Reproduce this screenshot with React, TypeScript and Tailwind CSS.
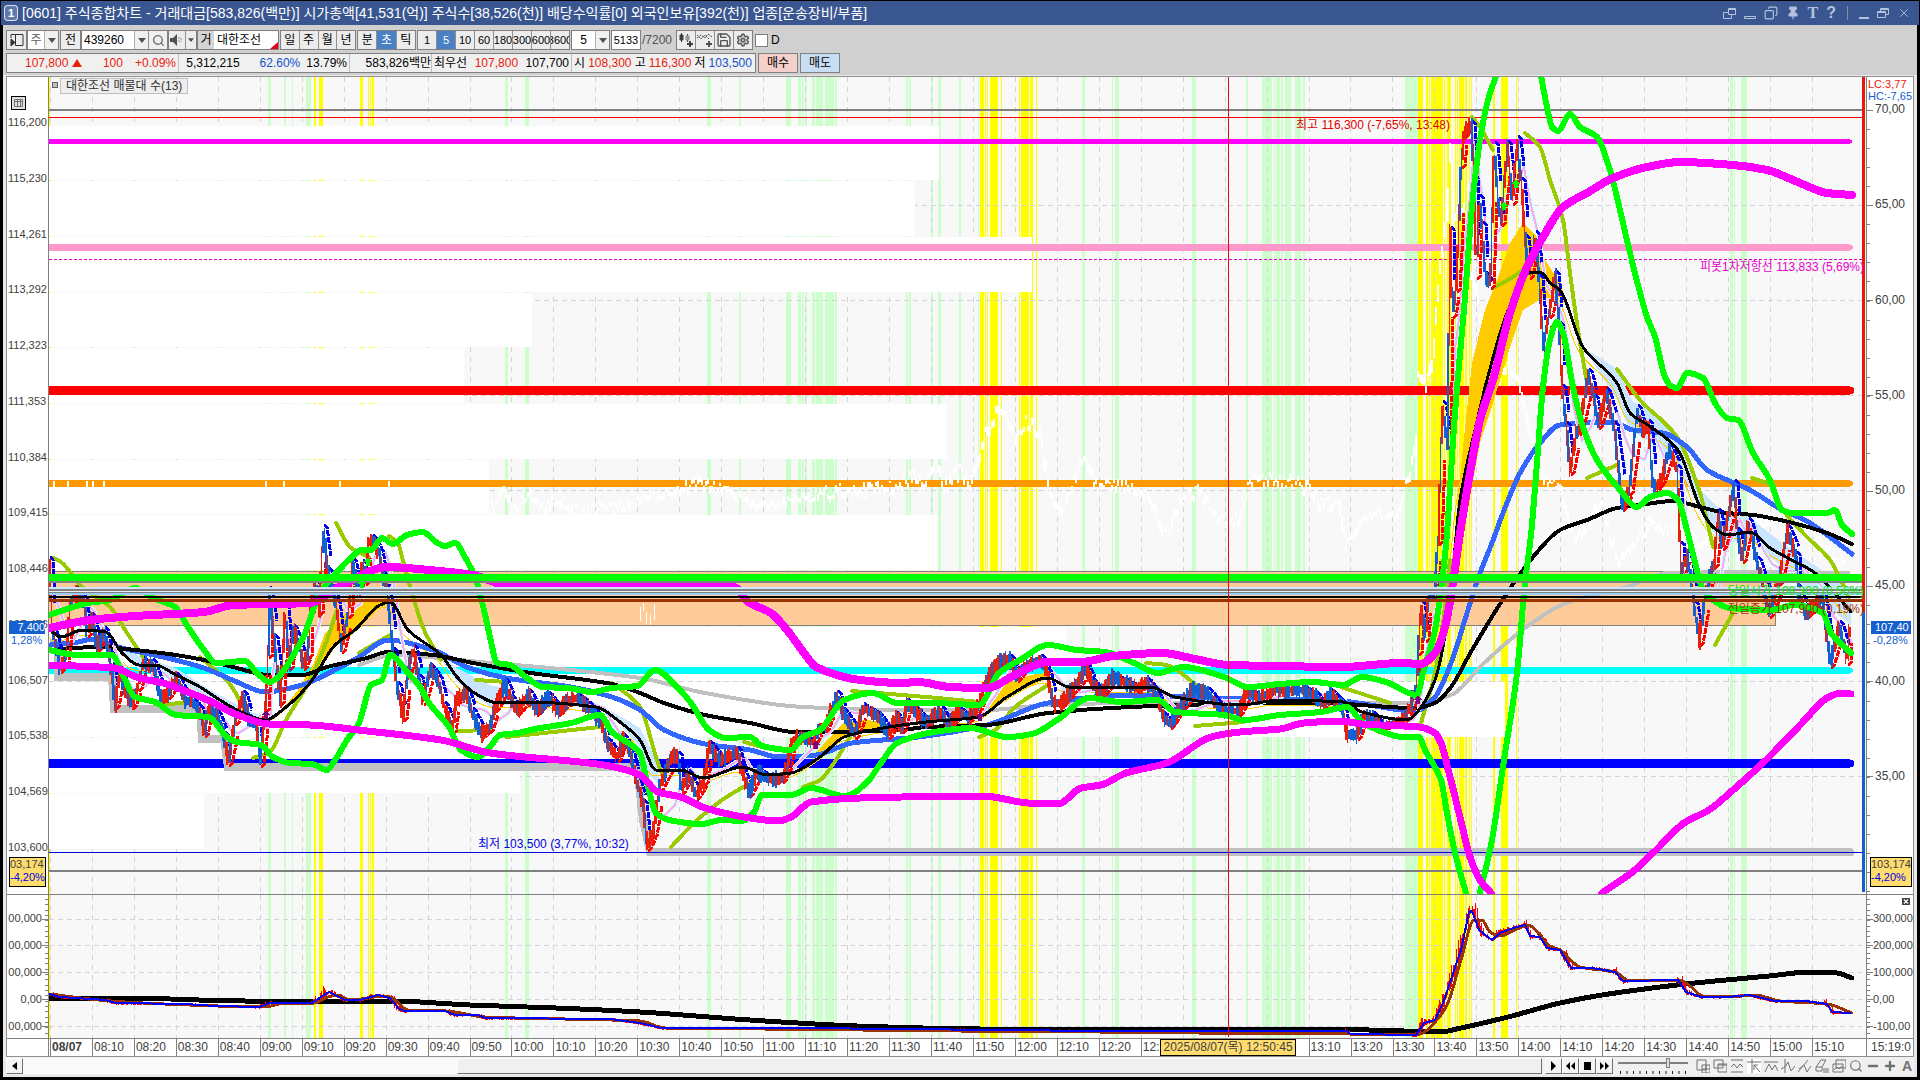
import { Search, Settings, Save, Pin, Copy, X, Minus, Plus } from 'lucide-react';
import { ReactNode, useState } from 'react';

type Point = [number, number];

const parse = (s: string): Point[] => s.split(' ').map((p) => p.split(',').map(Number) as Point);

// Seeded noise, so the candles look the same on every render
const createRandom = (seed: number) => () => {
  seed = (seed * 16807) % 2147483647;
  return seed / 2147483647;
};

const valueAt = (points: Point[], x: number) => {
  for (let i = 1; i < points.length; i++) {
    if (x <= points[i][0]) {
      const [x0, y0] = points[i - 1];
      const [x1, y1] = points[i];
      return x1 === x0 ? y1 : y0 + ((y1 - y0) * (x - x0)) / (x1 - x0);
    }
  }
  return points[points.length - 1][1];
};

// Rounded path through the points, level at every local top and bottom
const smoothPath = (s: string) => {
  const p = parse(s);
  const slope = p.map(([x, y], i) => {
    if (i === 0 || i === p.length - 1) return 0;
    const before = (y - p[i - 1][1]) / (x - p[i - 1][0]);
    const after = (p[i + 1][1] - y) / (p[i + 1][0] - x);
    return before * after <= 0 ? 0 : (2 * before * after) / (before + after);
  });
  slope[0] = (p[1][1] - p[0][1]) / (p[1][0] - p[0][0]);
  const n = p.length - 1;
  slope[n] = (p[n][1] - p[n - 1][1]) / (p[n][0] - p[n - 1][0]);
  let d = `M${p[0][0]} ${p[0][1]}`;
  for (let i = 1; i < p.length; i++) {
    const third = (p[i][0] - p[i - 1][0]) / 3;
    const y1 = p[i - 1][1] + slope[i - 1] * third;
    const y2 = p[i][1] - slope[i] * third;
    d += `C${(p[i - 1][0] + third).toFixed(1)} ${y1.toFixed(1)} ${(p[i][0] - third).toFixed(1)} ${y2.toFixed(1)} ${p[i][0]} ${p[i][1]}`;
  }
  return d;
};

const greenBands: Point[] = [
  [268, 3], [284, 2], [292, 1], [306, 5], [505, 3], [525, 4], [707, 4], [739, 2], [786, 5], [798, 3], [802, 2],
  [805, 2], [812, 3], [816, 7], [825, 9], [835, 2], [906, 2], [909, 2], [931, 2], [938, 3], [959, 2], [978, 1],
  [1082, 3], [1112, 1], [1115, 4], [1192, 4], [1246, 2], [1262, 10], [1274, 1], [1276, 4], [1281, 2], [1285, 6],
  [1295, 6], [1303, 2], [1405, 13], [1730, 3], [1734, 1], [1741, 6],
];

const yellowBands: Point[] = [
  [49, 1], [314, 2], [319, 4], [360, 3], [368, 1], [370, 1], [372, 2], [980, 4], [985, 1], [987, 1], [990, 8],
  [1001, 1], [1019, 1], [1021, 8], [1030, 3], [1036, 1], [1418, 5], [1426, 2], [1429, 1], [1431, 12], [1444, 1],
  [1447, 4], [1455, 1], [1457, 1], [1459, 5], [1465, 2], [1469, 1], [1471, 1], [1493, 2], [1501, 7], [1516, 1],
];

// Volume profile: top, bottom, right edge
const volumeBars = [
  [126, 180, 939], [181, 236, 915], [237, 292, 1032], [293, 347, 532], [348, 403, 464], [404, 459, 947],
  [460, 514, 489], [515, 570, 938], [627, 681, 1066], [682, 737, 1505], [738, 793, 520], [794, 849, 204],
];

const price = parse(
  '50,562 53,630 61,668 66,660 71,604 77,592 84,600 88,632 92,618 98,647 105,632 110,655 116,704 121,672 126,692 133,704 139,686 144,662 148,667 153,664 162,698 169,694 177,678 186,700 194,703 200,710 205,732 210,706 218,716 225,737 229,761 236,720 244,696 250,720 258,727 261,762 266,707 269,653 270,592 275,640 281,700 286,610 290,665 294,630 300,645 304,665 309,653 311,610 316,585 320,610 324,530 329,573 333,590 337,605 342,648 349,613 353,563 359,590 363,565 366,580 369,543 373,540 380,553 384,577 388,593 394,653 398,687 404,716 408,673 414,650 420,680 424,700 431,669 439,680 445,707 453,729 457,700 467,692 473,713 482,734 490,728 496,707 506,684 512,700 518,711 529,694 537,711 549,697 559,711 569,700 578,698 592,710 602,723 608,743 618,757 624,739 631,753 637,780 644,805 648,846 654,833 660,787 673,755 679,757 682,790 689,775 697,795 705,780 710,746 720,760 738,752 743,773 750,792 758,772 771,780 783,778 788,767 793,740 803,737 813,743 820,729 826,727 832,710 838,696 844,713 856,734 864,708 879,717 889,734 897,717 903,728 908,704 918,713 926,722 942,711 948,725 960,712 969,718 979,707 987,680 995,667 1003,659 1011,660 1018,677 1026,665 1042,660 1048,673 1054,704 1062,703 1073,690 1087,668 1093,683 1101,695 1113,677 1126,683 1138,688 1148,683 1158,697 1164,717 1171,724 1179,710 1193,689 1209,693 1220,710 1240,711 1248,692 1260,698 1273,690 1304,690 1317,697 1323,705 1331,694 1343,707 1347,734 1358,735 1364,717 1374,717 1382,728 1394,723 1402,722 1411,707 1417,687 1419,650 1422,606 1426,637 1429,597 1435,593 1439,540 1443,406 1448,444 1451,232 1453,313 1457,287 1462,163 1465,133 1470,126 1472,126 1475,180 1477,274 1480,200 1483,227 1486,277 1491,284 1495,147 1499,203 1502,221 1508,146 1513,200 1518,141 1522,183 1526,240 1530,274 1536,236 1540,280 1544,346 1550,313 1556,276 1560,327 1563,390 1567,427 1571,470 1577,433 1580,430 1589,374 1595,400 1599,424 1607,393 1615,427 1623,506 1630,490 1638,410 1643,430 1649,425 1654,490 1662,480 1670,449 1678,470 1681,547 1682,573 1688,555 1695,606 1700,641 1707,590 1715,563 1719,514 1723,545 1735,485 1738,533 1743,558 1749,523 1758,562 1770,613 1780,580 1788,530 1797,557 1799,590 1806,614 1823,597 1831,663 1840,626 1848,660 1850,632',
);

const bollUpper1 =
  '49,615 61,611 88,603 110,600 135,588 153,598 175,607 188,627 204,650 216,663 245,661 257,673 269,682 302,640 320,593 339,570 352,557 361,550 371,550 382,538 393,544 407,535 423,532 436,542 445,546 455,543 466,559 475,577 484,610 490,637 497,663 510,665 527,678 543,687 567,688 592,692 612,688 637,686 655,670 677,687 691,703 709,730 726,738 750,737 762,746 791,750 803,737 820,730 844,700 873,693 897,703 934,703 979,705 999,673 1020,660 1048,645 1077,650 1105,652 1134,663 1158,673 1183,667 1224,677 1248,687 1280,684 1313,682 1343,685 1362,677 1386,682 1417,695 1423,673 1435,630 1441,590 1446,545 1455,413 1465,297 1472,207 1480,140 1488,100 1496,76';
const bollUpper2 =
  '1541,76 1547,107 1552,127 1558,131 1570,114 1580,127 1597,137 1610,170 1620,210 1630,253 1647,317 1655,337 1665,377 1671,386 1677,388 1687,373 1703,378 1715,403 1727,418 1738,420 1753,453 1770,480 1782,510 1793,513 1827,513 1835,510 1842,525 1852,534';
const bollLower1 =
  '49,650 78,655 112,655 122,673 135,697 155,702 176,715 208,717 227,737 237,742 261,745 273,757 290,763 312,764 327,770 335,760 347,740 359,723 371,685 382,680 390,655 408,673 420,687 429,703 449,727 461,750 478,757 490,747 500,735 518,733 535,729 571,723 600,715 612,732 640,753 648,787 656,813 669,820 701,824 722,820 742,821 754,812 762,795 791,795 811,788 844,796 852,794 869,780 881,763 897,743 934,732 971,728 1007,737 1032,734 1060,718 1089,698 1122,702 1158,700 1175,712 1224,715 1244,720 1280,715 1321,712 1347,707 1362,722 1386,733 1402,737 1419,737 1425,750 1441,780 1447,813 1455,853 1466,893';
const bollLower2 =
  '1480,893 1492,840 1504,760 1517,673 1525,583 1531,535 1537,463 1543,387 1550,340 1557,322 1563,333 1573,387 1583,427 1597,460 1620,490 1637,507 1650,497 1667,493 1678,500 1687,530 1692,550 1703,590 1713,600 1729,608 1770,610 1794,605 1823,613 1831,633 1851,653';
const envUpper =
  '49,628 90,620 135,616 204,612 233,605 310,603 339,587 388,567 429,570 473,575 510,586 640,586 734,587 748,602 771,613 787,630 804,653 816,667 860,680 901,683 918,682 950,687 987,688 1015,675 1048,662 1081,662 1113,656 1162,653 1195,659 1228,665 1280,666 1341,667 1402,663 1421,664 1435,653 1445,627 1453,583 1459,540 1470,473 1480,420 1493,380 1510,313 1527,267 1543,237 1563,207 1587,193 1613,178 1647,167 1680,162 1733,165 1767,170 1800,183 1827,193 1852,195';
const envLower1 =
  '49,665 114,668 139,678 163,683 188,692 212,702 233,713 269,724 310,725 367,731 441,740 490,753 604,765 640,775 658,792 681,797 705,808 738,816 779,821 791,817 811,802 860,798 983,796 1028,803 1058,804 1081,788 1101,785 1126,773 1167,763 1211,737 1240,732 1280,729 1304,723 1341,721 1362,724 1419,727 1435,733 1441,743 1449,773 1460,817 1470,857 1480,880 1491,893';
const envLower2 = '1602,893 1635,870 1656,850 1684,823 1709,810 1733,790 1766,760 1802,723 1827,698 1841,693 1851,694';
const blackLong =
  '49,650 73,648 102,647 135,650 176,655 204,660 233,667 269,675 302,675 327,667 367,658 388,652 433,655 473,663 531,673 612,684 640,693 664,703 705,715 750,723 795,732 832,732 901,730 926,727 987,725 1048,713 1130,707 1280,703 1321,703 1415,708 1435,703 1451,687 1472,650 1509,590 1533,557 1560,530 1587,520 1617,508 1640,505 1673,501 1700,507 1727,513 1753,515 1793,523 1827,533 1852,544';
const blackShort =
  '50,630 61,637 82,630 106,632 122,653 139,665 155,665 176,675 200,687 220,700 241,712 265,720 286,707 310,683 335,645 355,630 380,605 390,602 408,630 441,655 457,677 473,692 498,703 527,702 596,707 620,722 640,740 656,770 681,770 703,778 742,767 767,775 791,773 820,757 844,737 877,729 926,722 979,717 1007,697 1048,678 1069,687 1150,687 1175,697 1240,705 1280,700 1343,702 1362,712 1407,720 1419,710 1435,680 1443,647 1451,590 1460,500 1475,430 1487,380 1507,313 1530,272 1542,273 1550,283 1560,290 1583,347 1617,383 1630,413 1648,425 1678,450 1700,507 1713,527 1727,535 1750,532 1770,548 1786,557 1815,573 1851,612';
const blueMa =
  '50,645 73,643 94,639 118,647 163,657 204,668 237,682 265,692 302,685 331,672 359,657 388,640 433,650 469,668 506,678 571,687 612,697 640,710 664,730 705,744 750,750 779,757 816,755 852,743 918,737 987,725 1048,703 1130,695 1211,698 1280,699 1341,701 1415,711 1435,697 1451,663 1468,610 1480,573 1492,543 1503,513 1520,473 1540,443 1560,425 1613,422 1633,430 1663,433 1687,447 1707,470 1750,490 1777,507 1810,523 1852,554';
const grayMa =
  '359,665 392,655 440,658 490,663 539,667 640,678 705,693 803,707 901,710 987,710 1048,705 1130,703 1341,703 1415,703 1451,695 1484,663 1525,628 1566,603 1627,587 1668,573 1770,572 1848,573';
const silverStep = '50,643 58,643 58,677 112,677 114,709 200,709 202,739 224,739 228,767 637,767 643,820 650,852 1852,852';

const oliveSegments = [
  '53,558 61,562 82,587 110,607 127,633 143,657',
  '155,704 196,703',
  '200,657 229,683 245,710',
  '253,758 269,753 286,720 310,680 327,640 337,610',
  '336,523 350,547 369,557',
  '389,536 398,543 402,557 412,593 424,630 441,660',
  '359,653 390,635',
  '457,731 490,730',
  '476,680 506,682',
  '506,737 600,727',
  '612,683 640,707 656,757 664,780',
  '671,847 697,820 722,800 750,783',
  '744,742 762,747',
  '803,787 820,780 836,760 852,733',
  '852,691 926,697 979,702',
  '979,737 995,730 1015,707 1048,685',
  '1146,663 1166,665 1199,687',
  '1195,726 1244,722',
  '1341,687 1390,703',
  '1421,723 1435,673 1443,623 1450,560',
  '1472,117 1480,127 1493,150',
  '1525,133 1540,147 1550,180 1563,220 1570,273 1578,330 1587,383',
  '1493,288 1513,277 1527,267',
  '1587,478 1617,465',
  '1617,369 1640,400 1677,437 1700,493 1713,547',
  '1715,645 1733,613',
  '1752,478 1770,485 1783,510 1807,537 1830,560 1849,597',
];

const orangeClouds = [
  '286,705 298,690 313,665 325,633 343,615 366,600 390,598 390,604 380,607 355,632 335,647 310,685',
  '812,757 844,722 862,720 899,722 877,729 844,737 820,757',
  '979,717 1007,683 1030,675 1055,672 1048,678 1007,697',
  '1452,560 1463,447 1472,363 1485,310 1497,280 1510,243 1523,223 1537,237 1543,257 1560,283 1570,310 1560,297 1543,298 1523,310 1510,347 1493,403 1480,443 1467,513 1458,570',
];

const blueClouds = [
  '112,640 139,656 176,668 210,690 250,712 265,716 265,722 241,715 176,680 139,670',
  '433,648 457,668 490,685 512,690 520,703 490,707 457,682',
  '606,708 640,728 656,760 660,785 650,776 640,748',
  '1062,680 1075,690 1060,697',
  '1583,347 1617,369 1633,402 1660,416 1680,440 1700,490 1720,510 1750,518 1785,545 1851,590 1851,625 1820,600 1786,570 1750,540 1720,543 1700,510 1678,465 1648,440 1630,430 1617,400',
];

const whiteTrace = parse(
  '492,505 505,485 515,510 528,490 545,505 555,495 580,510 640,500 700,480 760,505 830,490 900,483 915,472 925,480 938,462 945,485 960,466 970,482 980,450 985,430 1001,402 1015,435 1026,420 1040,430 1050,483 1060,512 1072,483 1085,448 1095,483 1110,480 1130,485 1150,495 1165,535 1185,490 1200,490 1220,518 1240,518 1248,480 1270,475 1290,480 1310,485 1322,502 1340,500 1346,545 1370,510 1395,515 1410,470 1416,440 1418,370 1425,385 1433,350 1440,260 1448,190 1450,140 1456,210 1464,200 1470,260 1478,295 1488,355 1495,300 1500,360 1520,380 1530,430 1545,480 1560,480 1575,540 1600,500 1620,560 1650,520 1700,540 1760,520 1800,515 1840,560',
);

const subBlack =
  '49,999 124,998 245,1001 390,1001 470,1005 556,1008 640,1012 750,1020 857,1026 980,1029 1369,1030 1440,1032 1461,1028 1508,1017 1560,1003 1602,995 1686,984 1769,976 1810,972 1826,972 1837,973 1852,978';
const subBlue =
  '49,994 60,997 105,1000 116,1003 185,1004 216,1006 259,1007 270,1003 312,1003 322,996 329,992 345,1000 360,1000 378,995 390,998 398,1008 404,1011 445,1011 455,1015 478,1015 485,1018 610,1019 640,1023 661,1028 800,1028 1100,1031 1346,1031 1351,1034 1416,1035 1424,1023 1435,1020 1443,1003 1461,950 1469,912 1472,911 1479,930 1492,940 1500,933 1513,928 1525,925 1530,936 1540,937 1547,948 1560,950 1571,968 1592,968 1615,972 1623,981 1678,980 1686,992 1701,997 1728,997 1749,995 1775,1001 1806,1001 1827,1004 1832,1012 1850,1013';
const subBrown =
  '49,994 110,1001 190,1005 265,1007 285,1003 314,1003 328,997 338,995 350,1000 384,996 392,998 408,1010 446,1011 485,1017 640,1021 665,1028 1100,1032 1350,1034 1420,1034 1435,1022 1447,1005 1461,960 1474,920 1482,920 1490,932 1500,936 1515,930 1528,925 1540,935 1548,945 1560,950 1580,967 1615,972 1630,981 1680,980 1690,986 1703,996 1728,997 1755,995 1780,1001 1827,1004 1852,1013';

const times = [
  '08/07', '08:10', '08:20', '08:30', '08:40', '09:00', '09:10', '09:20', '09:30', '09:40', '09:50', '10:00', '10:10',
  '10:20', '10:30', '10:40', '10:50', '11:00', '11:10', '11:20', '11:30', '11:40', '11:50', '12:00', '12:10', '12:20',
  '12:', '', '', '', '13:10', '13:20', '13:30', '13:40', '13:50', '14:00', '14:10', '14:20', '14:30', '14:40', '14:50',
  '15:00', '15:10',
];

const leftPrices = [
  '116,200', '115,230', '114,261', '113,292', '112,323', '111,353', '110,384', '109,415', '108,446', '107,476',
  '106,507', '105,538', '104,569', '103,600',
];

function Bands({ top, bottom }: { top: number; bottom: number }) {
  return (
    <>
      {greenBands.map(([x, w]) => (
        <rect key={`g${x}`} x={x} y={top} width={w} height={bottom - top} fill="#ccffcc" />
      ))}
      {yellowBands.map(([x, w]) => (
        <rect key={`y${x}`} x={x} y={top} width={w} height={bottom - top} fill="#ffff00" />
      ))}
      {times.map((_, i) => (
        <line
          key={i}
          x1={Math.round(50 + i * 41.95) + 0.5}
          x2={Math.round(50 + i * 41.95) + 0.5}
          y1={top}
          y2={bottom}
          stroke="#d4d4d4"
          strokeDasharray="5 5"
        />
      ))}
    </>
  );
}

function Curve({ points, color, width, straight }: { points: string; color: string; width: number; straight?: boolean }) {
  return (
    <path
      d={straight ? `M${points}` : smoothPath(points)}
      fill="none"
      stroke={color}
      strokeWidth={width}
      strokeLinejoin="round"
      strokeLinecap="round"
    />
  );
}

function Candles() {
  const random = createRandom(77);
  let red = '';
  let blue = '';
  for (let x = 50; x <= 1850; x += 1.5) {
    const y = valueAt(price, x);
    const y2 = valueAt(price, x + 1.5);
    const size = 3 + random() * 6;
    const seg = `M${x.toFixed(1)} ${(Math.min(y, y2) - size).toFixed(1)}V${(Math.max(y, y2) + size).toFixed(1)}`;
    const rising = y2 < y ? 0.66 : 0.36;
    if (random() < rising) red += seg;
    else blue += seg;
  }

  // Trailing stops: blue hangs over the falls, red runs under the rises
  let over = '';
  let under = '';
  for (let i = 1; i < price.length; i++) {
    const [x0, y0] = price[i - 1];
    const [x1, y1] = price[i];
    const dy = y1 - y0;
    if (dy > 4) over += `M${x0} ${y0 - 5}L${x0 + 3} ${y0 - 3}L${x1 + 2} ${y0 + dy * 0.6}`;
    if (dy < -4) under += `M${x0} ${y0 + 5}L${x0 + 3} ${y0 + 3}L${x1 + 2} ${y0 + dy * 0.6}`;
  }

  const average = price
    .map(([x], i) => {
      const part = price.slice(Math.max(0, i - 3), i + 1);
      return `${x + 2},${part.reduce((sum, p) => sum + p[1], 0) / part.length}`;
    })
    .join(' ');

  return (
    <g fill="none">
      <polyline points={average} stroke="#ccffff" strokeWidth="4" />
      <polyline points={average} stroke="#ffaaee" strokeWidth="2" />
      <path d={over} stroke="#0000f0" strokeWidth="3" strokeDasharray="6 1" />
      <path d={under} stroke="#ff0000" strokeWidth="3" strokeDasharray="6 1" />
      <path d={blue} stroke="#1560d0" strokeWidth="1.5" />
      <path d={red} stroke="#e8200c" strokeWidth="1.5" />
    </g>
  );
}

function WhiteTrace() {
  const random = createRandom(311);
  let d = '';
  for (let x = 492; x < 1845; x += 2) {
    const y = valueAt(whiteTrace, x) + (random() - 0.5) * 12;
    const next = valueAt(whiteTrace, x + 2);
    d += `M${x} ${y.toFixed(1)}v${(2 + random() * 5 + Math.abs(next - valueAt(whiteTrace, x)) * 0.6).toFixed(1)}`;
  }
  [54, 68, 87, 93, 104, 266, 284, 340, 389].forEach((x) => {
    d += `M${x} 481v6`;
  });
  return <path d={d} stroke="#ffffff" strokeWidth="2" fill="none" />;
}

function Marker({ x, y, color }: { x: number; y: number; color: string }) {
  return <path d={`M${x} ${y - 5}l4 5h-2v4h-4v-4h-2z`} fill={color} />;
}

function PriceChart() {
  const level = (y: number, color: string, width: number, end = 1850) => (
    <line x1={49} x2={end} y1={y} y2={y} stroke={color} strokeWidth={width} />
  );
  return (
    <svg
      viewBox="49 77 1817 817"
      preserveAspectRatio="none"
      shapeRendering="crispEdges"
      className="absolute inset-0 w-full h-full"
    >
      <Bands top={77} bottom={894} />
      {[205, 300, 395, 490, 586, 681, 776].map((y) => (
        <line key={y} x1={49} x2={1862} y1={y + 0.5} y2={y + 0.5} stroke="#d4d4d4" strokeDasharray="5 4" />
      ))}
      {volumeBars.map(([top, bottom, right]) => (
        <rect key={top} x={49} y={top} width={right - 49} height={bottom - top} fill="#ffffff" />
      ))}

      {/* Levels */}
      {level(110, '#808080', 2, 1862)}
      {level(117.5, '#f00000', 1, 1862)}
      {level(141.5, '#ff00ff', 5)}
      {level(247.5, '#ff99cc', 7)}
      <line x1={49} x2={1862} y1={259.5} y2={259.5} stroke="#e800c8" strokeDasharray="3 2" />
      {level(390.5, '#ff0000', 9)}
      {level(483.5, '#ff9900', 7)}
      {level(670.5, '#00ffff', 7)}
      {level(763.5, '#0000ff', 9)}
      {[
        [141.5, '#ff00ff', 2], [247.5, '#ff99cc', 3], [390.5, '#ff0000', 4], [483.5, '#ff9900', 3],
        [670.5, '#00ffff', 3], [763.5, '#0000ff', 4], [852.5, '#c0c0c0', 4],
      ].map(([y, color, r]) => (
        <circle key={y} cx={1850} cy={y} r={r} fill={color as string} />
      ))}
      {level(871, '#808080', 2, 1862)}

      {/* Opening range box */}
      <rect x={48} y={571.5} width={1727} height={54} fill="#ffcc99" stroke="#808080" />
      <WhiteTrace />
      <path d="M640 607v14M643 603v8M646 612v12M650 615v10M654 604v16" stroke="#ffffff" strokeWidth="1" />

      <polyline points={silverStep} fill="none" stroke="#c0c0c0" strokeWidth="8" />
      {level(852.5, '#0000e0', 1, 1862)}
      <line x1={228} x2={640} y1={760.5} y2={760.5} stroke="#0000ff" strokeWidth="3" />

      {blueClouds.map((p) => (
        <polygon key={p} points={p} fill="#c8e4ff" />
      ))}
      {orangeClouds.map((p) => (
        <polygon key={p} points={p} fill="#ffcc00" />
      ))}
      <g transform="translate(-4 5)">
        <Curve points={blackShort} color="#ffcc00" width={1} />
      </g>

      <Curve points={grayMa} color="#c0c0c0" width={4} />
      {oliveSegments.map((p) => (
        <Curve key={p} points={p} color="#99cc00" width={4} />
      ))}
      <Curve points={blueMa} color="#3366ff" width={5} />
      <Curve points={blackLong} color="#000000" width={4} />
      <Candles />
      <Curve points={blackShort} color="#000000" width={3} />
      <Curve points={bollUpper1} color="#00ff00" width={6} />
      <Curve points={bollUpper2} color="#00ff00" width={6} />
      <Curve points={bollLower1} color="#00ff00" width={6} />
      <Curve points={bollLower2} color="#00ff00" width={6} />
      <Curve points={envUpper} color="#ff00ff" width={8} />
      <Curve points={envLower1} color="#ff00ff" width={7} />
      <Curve points={envLower2} color="#ff00ff" width={7} />

      {level(577.5, '#00ff00', 7, 1862)}
      {level(582, '#808080', 2, 1862)}
      {level(588, '#cce6ff', 2, 1862)}
      {level(590, '#808080', 2, 1862)}
      {level(591.5, '#f0f0f0', 1, 1862)}
      {level(592.5, '#808080', 1, 1862)}
      {level(594, '#99ccff', 2, 1862)}
      {level(597, '#000000', 2, 1862)}
      {level(600.5, '#993300', 3, 1862)}

      <Marker x={266} y={715} color="#800080" />
      <Marker x={816} y={745} color="#800080" />
      <Marker x={980} y={717} color="#800080" />
      <Marker x={1418} y={700} color="#800080" />
      <Marker x={362} y={584} color="#00ff00" />
      <Marker x={368} y={562} color="#00ff00" />
      <Marker x={1504} y={206} color="#00ff00" />
      <Marker x={1516} y={184} color="#00ff00" />

      {/* Crosshair and the range bar on the right */}
      <line x1={1228.5} x2={1228.5} y1={77} y2={894} stroke="#e01010" />
      <rect x={1862} y={77} width={3} height={535} fill="#e8180c" />
      <rect x={1862} y={612} width={3} height={280} fill="#1560d0" />
    </svg>
  );
}

function ObvChart() {
  const random = createRandom(19);
  const line = parse(subBlue);
  let red = '';
  for (let x = 50; x < 1850; x += 1) {
    const y = valueAt(line, x);
    const slope = Math.abs(valueAt(line, x + 4) - valueAt(line, x - 4));
    const size = Math.min(16, 1 + slope * 0.7);
    red += `M${x} ${(y - random() * size * 1.2).toFixed(1)}V${(y + 1 + random() * size * 0.5).toFixed(1)}`;
  }
  return (
    <svg
      viewBox="49 895 1817 143"
      preserveAspectRatio="none"
      shapeRendering="crispEdges"
      className="absolute inset-0 w-full h-full"
    >
      <Bands top={895} bottom={1038} />
      {[919, 945, 972, 999, 1026].map((y) => (
        <line key={y} x1={49} x2={1862} y1={y + 0.5} y2={y + 0.5} stroke="#d4d4d4" strokeDasharray="5 4" />
      ))}
      <Curve points={subBlack} color="#000000" width={5} />
      <path d={red} stroke="#ff0000" strokeWidth="1" />
      <path d="M323 1000v-14M324 996v-8" stroke="#ff0000" strokeWidth="1" />
      <Curve points={subBrown} color="#993300" width={3} />
      <Curve points={subBlue} color="#0000ff" width={2} straight />
      <line x1={1228.5} x2={1228.5} y1={895} y2={1037} stroke="#e01010" />
    </svg>
  );
}

function ToolButton({ children, active, label }: { children: ReactNode; active?: boolean; label?: string }) {
  return (
    <button
      aria-label={label}
      className={`flex-1 h-full flex items-center justify-center border-r border-[#909090] last:border-r-0 overflow-hidden ${
        active ? 'bg-[#4a80c4] text-white' : 'bg-[#ececec] text-black'
      }`}
    >
      {children}
    </button>
  );
}

function Arrow() {
  return (
    <span className="w-[14px] h-full bg-[#f0f0f0] border-l border-[#b0b0b0] flex items-center justify-center pointer-events-none">
      <svg viewBox="0 0 8 5" className="w-2 h-[5px]">
        <path d="M0 0h8L4 5z" fill="#505050" />
      </svg>
    </span>
  );
}

const box = 'h-5 border border-[#808080] flex shrink-0 overflow-hidden';

function Toolbar() {
  const [code, setCode] = useState('439260');
  const [name, setName] = useState('대한조선');
  const [count, setCount] = useState('5133');
  return (
    <div className="flex h-5 items-center">
      <div className={`${box} w-[21px]`}>
        <ToolButton label="패널">
          <svg viewBox="0 0 14 14" className="w-[14px] h-[14px]" fill="none" stroke="#333">
            <path d="M1 5V1.500h12v11H5.500M5.500 1.500v11" />
            <path d="M1 6v7l4-3.500z" fill="#333" />
          </svg>
        </ToolButton>
      </div>
      <label className={`${box} w-8 bg-white`}>
        <select aria-label="구분" className="flex-1 min-w-0 appearance-none text-center text-[#606060]">
          <option>주</option>
        </select>
        <Arrow />
      </label>
      <div className={`${box} w-[21px] ml-[1px]`}>
        <ToolButton>전</ToolButton>
      </div>
      <div className={`${box} w-[87px] bg-white`}>
        <input
          aria-label="종목코드"
          value={code}
          onChange={(e) => setCode(e.target.value)}
          className="flex-1 min-w-0 pl-[2px] outline-none"
        />
        <Arrow />
        <button aria-label="검색" className="w-[19px] h-full bg-[#f0f0f0] border-l border-[#909090] flex items-center justify-center">
          <Search className="w-[13px] h-[13px] text-[#707070]" strokeWidth={2.5} />
        </button>
      </div>
      <div className={`${box} w-[29px]`}>
        <ToolButton label="소리">
          <svg viewBox="0 0 14 12" className="w-[14px] h-3">
            <path d="M0 4h3l4-4v12L3 8H0z" fill="#505050" />
            <path d="M9 3v6M11 4v4" stroke="#909090" strokeDasharray="2 1" />
          </svg>
        </ToolButton>
        <span className="w-[10px] flex items-center justify-center bg-[#ececec]">
          <svg viewBox="0 0 8 5" className="w-[6px] h-1">
            <path d="M0 0h8L4 5z" fill="#505050" />
          </svg>
        </span>
      </div>
      <label className={`${box} w-[82px] bg-white relative`}>
        <span className="w-4 bg-[#d4d4d4] text-center">거</span>
        <input
          aria-label="종목명"
          value={name}
          onChange={(e) => setName(e.target.value)}
          className="flex-1 min-w-0 pl-[3px] outline-none"
        />
        <svg viewBox="0 0 8 7" className="absolute right-0 bottom-0 w-2 h-[7px]">
          <path d="M8 0v7H0z" fill="#e00020" />
        </svg>
      </label>
      <div className={`${box} w-[76px] ml-[1px]`}>
        {['일', '주', '월', '년'].map((t) => (
          <ToolButton key={t}>{t}</ToolButton>
        ))}
      </div>
      <div className={`${box} w-[59px] ml-[1px]`}>
        {['분', '초', '틱'].map((t) => (
          <ToolButton key={t} active={t === '초'}>
            {t}
          </ToolButton>
        ))}
      </div>
      <div className={`${box} w-[153px] ml-[1px] text-[11px]`}>
        {['1', '5', '10', '60', '180', '300', '600', '3600'].map((t) => (
          <ToolButton key={t} active={t === '5'}>
            {t}
          </ToolButton>
        ))}
      </div>
      <label className={`${box} w-[39px] ml-[1px] bg-white`}>
        <select aria-label="주기" className="flex-1 min-w-0 appearance-none text-center">
          <option>5</option>
        </select>
        <Arrow />
      </label>
      <input
        aria-label="봉 수"
        value={count}
        onChange={(e) => setCount(e.target.value)}
        className="w-[30px] h-5 ml-[1px] border border-[#808080] bg-white text-center text-[11px] outline-none"
      />
      <span className="w-[35px] pl-[1px] text-[#505050]">/7200</span>
      <div className={`${box} w-[77px]`}>
        <ToolButton label="차트 추가">
          <svg viewBox="0 0 16 14" className="w-4 h-[14px]" stroke="#404040">
            <path d="M3.500 0v9M9.500 1v8" />
            <path d="M2 2h3v5H2z" fill="#404040" />
            <path d="M8 3h3v4H8z" fill="#a0a0a0" stroke="#909090" />
            <path d="M9 11h6M12 8v6" strokeWidth="2" />
          </svg>
        </ToolButton>
        <ToolButton label="지표 추가">
          <svg viewBox="0 0 16 14" className="w-4 h-[14px]" stroke="#505050" fill="none">
            <path d="M0 5l4-3 4 3 3-4 4 3M0 2l4 4 4-4 4 4" strokeDasharray="2 1" />
            <path d="M9 11h6M12 8v6" strokeWidth="2" />
          </svg>
        </ToolButton>
        <ToolButton label="저장">
          <Save className="w-4 h-4 text-[#505050]" strokeWidth={2} />
        </ToolButton>
        <ToolButton label="설정">
          <Settings className="w-[14px] h-[14px] text-[#606060]" strokeWidth={3} />
        </ToolButton>
      </div>
      <label className="flex items-center ml-[2px] gap-[3px]">
        <input type="checkbox" className="appearance-none w-[13px] h-[13px] border border-[#808080] bg-white" />D
      </label>
    </div>
  );
}

function QuoteBar() {
  return (
    <div className="flex h-5 mt-[3px]">
      <div className="w-[750px] h-5 border border-[#808080] bg-[#f0f0f0] flex items-center [&>div]:h-full [&>div]:flex [&>div]:items-center [&>div]:border-r [&>div]:border-[#c0c0c0]">
        <div className="w-[172px] pl-[18px] pr-[2px] text-[#e8200c]">
          <span>107,800</span>
          <svg viewBox="0 0 10 8" className="w-[10px] h-2 ml-1">
            <path d="M5 0l5 8H0z" fill="#e8200c" />
          </svg>
          <span className="flex-1 text-right pr-3">100</span>
          <span>+0.09%</span>
        </div>
        <div className="w-[171px] justify-end gap-[6px] pr-[2px]">
          <span className="mr-[14px]">5,312,215</span>
          <span className="text-[#1450c8]">62.60%</span>
          <span>13.79%</span>
        </div>
        <div className="w-[82px] justify-end">583,826백만</div>
        <div className="w-[140px] justify-between px-[2px]">
          <span>최우선</span>
          <span className="text-[#e8200c]">107,800</span>
          <span>107,700</span>
        </div>
        <div className="flex-1 justify-between pl-[2px] pr-[3px] border-r-0!">
          <span>시</span>
          <span className="text-[#e8200c]">108,300</span>
          <span>고</span>
          <span className="text-[#e8200c]">116,300</span>
          <span>저</span>
          <span className="text-[#1450c8]">103,500</span>
        </div>
      </div>
      <button className="w-10 h-5 ml-[2px] border border-[#808080] bg-[#f5cfca]">매수</button>
      <button className="w-10 h-5 ml-[2px] border border-[#808080] bg-[#c6ddf4]">매도</button>
    </div>
  );
}

function TitleBar() {
  return (
    <header className="h-6 mx-[1px] bg-[#3a5690] text-white flex items-center justify-between pl-[3px] pr-2 shrink-0">
      <div className="flex items-center gap-1">
        <span className="w-[14px] h-4 border border-white/80 rounded-sm bg-[#6079ac] text-[11px] font-bold flex items-center justify-center">
          1
        </span>
        <h1 className="text-sm leading-4 whitespace-pre">
          [0601] 주식종합차트 - 거래대금[583,826(백만)] 시가총액[41,531(억)] 주식수[38,526(천)] 배당수익률[0] 외국인보유[392(천)] 업종[운송장비/부품]
        </h1>
      </div>
      <div className="flex items-center gap-2 text-[#b4c2de]">
        <button aria-label="분리">
          <svg viewBox="0 0 13 12" className="w-[13px] h-3" fill="none" stroke="currentColor">
            <path d="M5.500 1.500h7v6h-7zM5.500 2.500h7M5 5.500H.5v6h8V8" />
          </svg>
        </button>
        <button aria-label="내리기">
          <svg viewBox="0 0 12 12" className="w-3 h-3" fill="none" stroke="currentColor">
            <path d="M.5 9.500h11v2H.5z" />
          </svg>
        </button>
        <button aria-label="복사">
          <Copy className="w-[14px] h-[14px] -scale-x-100" />
        </button>
        <button aria-label="고정">
          <Pin className="w-[14px] h-[14px] fill-current" />
        </button>
        <button className="font-['Liberation_Serif',serif] text-base leading-4 font-bold">T</button>
        <button className="text-base leading-4 font-bold">?</button>
        <span className="w-[1px] h-[14px] bg-[#8090a8] mx-[3px]" />
        <button aria-label="최소화" className="w-[10px] h-3 border-b-2 border-current" />
        <button aria-label="복원">
          <svg viewBox="0 0 12 12" className="w-3 h-3" fill="none" stroke="currentColor">
            <path d="M3.500 4V1.500h8v6H9M.5 4.500h8v6h-8zM.5 5.500h8M3.500 2.500h8" />
          </svg>
        </button>
        <button aria-label="닫기">
          <X className="w-[14px] h-[14px]" strokeWidth={1.5} />
        </button>
      </div>
    </header>
  );
}

function Ticks({ values }: { values: number[] }) {
  return (
    <>
      {values.map((v) => (
        <path key={v} d={`M0 ${v}.500h3`} stroke="#808080" />
      ))}
    </>
  );
}

const rightMinor = Array.from({ length: 43 }, (_, i) => Math.round(33 + (i - 1) * 19.05)).filter((v) => v > 33);
const subMinor = Array.from({ length: 27 }, (_, i) => 4 + Math.round(i * 5.35));

function ScrollBar() {
  const key = 'w-[17px] h-4 bg-[#f4f4f4] border border-white border-r-[#707070] border-b-[#707070] flex items-center justify-center';
  const icons = [
    'M1 1h9v10H1zM6 6h8v8H6zM10 6v8M6 10h8',
    'M1 1h9v8H1zM5 5h9v8H5zM5 6h9',
    'M1 1h12M1 13h12M1 8l3-3 3 4 3-4 3 3',
    'M5 0v14M0 3h14M7 6l6 7M7 6v5M7 6h4',
    'M0 3h14M1 13l4-8 3 6 3-5 3 6',
    'M4 0v14M0 10l4-2 3-5 3 9 4-5',
    'M0 13L10 1M1 10l5-4 3 7 4-6',
    'M1 8l5-7h5l-4 7zM1 8v4h6V8M9 9v5M11 9v5M13 9v5',
    'M4 1h10v8H4zM1 5h10v8H1zM2 11l3-3 2 2 3-3',
  ];
  return (
    <footer className="h-[18px] mx-[3px] bg-[#f0f0f0] flex items-center shrink-0">
      <button aria-label="왼쪽" className={key}>
        <svg viewBox="0 0 5 8" className="w-[5px] h-2">
          <path d="M5 0v8L0 4z" />
        </svg>
      </button>
      <div className="flex-1 h-4 bg-[#fafafa] flex">
        <div className="w-[28.600%]" />
        <div className="flex-1 bg-[#f0f0f0] border border-white border-r-[#707070] border-b-[#707070]" />
      </div>
      <div className="flex ml-[3px]">
        {['M3 0v10l5-5z', 'M5 1v8L1 5zM10 1v8L6 5z', 'M2 1h7v8H2z', 'M1 1v8l4-4zM6 1v8l4-4z'].map((d) => (
          <button key={d} aria-label="재생" className={key}>
            <svg viewBox="0 0 11 10" className="w-[11px] h-[10px]">
              <path d={d} />
            </svg>
          </button>
        ))}
      </div>
      <label className="w-[70px] ml-[5px] h-4 flex flex-col justify-between">
        <input
          type="range"
          aria-label="배율"
          defaultValue={73}
          className="appearance-none w-full h-[10px] bg-[linear-gradient(#808080,#808080)] bg-[length:100%_2px] bg-no-repeat bg-center [&::-webkit-slider-thumb]:appearance-none [&::-webkit-slider-thumb]:w-1 [&::-webkit-slider-thumb]:h-[10px] [&::-webkit-slider-thumb]:bg-[#e0e0e0] [&::-webkit-slider-thumb]:border [&::-webkit-slider-thumb]:border-[#808080]"
        />
        <svg viewBox="0 0 70 3" className="w-full h-[3px]">
          <path d="M2 1.500h68" stroke="#202020" strokeWidth="3" strokeDasharray="1 5.500" />
        </svg>
      </label>
      <div className="flex items-center ml-2 gap-[3px] text-[#707070]">
        {icons.map((d, i) => (
          <button key={d} aria-label={`도구 ${i + 1}`} className={i === 3 ? 'bg-white' : ''}>
            <svg viewBox="0 0 14 14" className="w-[14px] h-[14px]" fill="none" stroke="currentColor">
              <path d={d} />
            </svg>
          </button>
        ))}
        <button aria-label="돋보기">
          <Search className="w-[14px] h-[14px]" />
        </button>
        <button aria-label="축소">
          <Minus className="w-[14px] h-[14px]" strokeWidth={4} />
        </button>
        <button aria-label="확대">
          <Plus className="w-[14px] h-[14px]" strokeWidth={4} />
        </button>
        <button className="w-[14px] text-sm leading-4 font-bold">A</button>
      </div>
    </footer>
  );
}

function PriceTag({ value }: { value: string }) {
  return (
    <div className="bg-[#ffdc6e] border border-black text-[11px] leading-[13px] h-[30px] overflow-hidden">
      <div className="text-[#404040]">{value}</div>
      <div className="text-[#0000e0]">-4,20%</div>
    </div>
  );
}

export default function App() {
  return (
    <div className="h-screen w-full bg-black pt-[1px] pb-[3px] flex flex-col overflow-hidden text-xs leading-[18px] font-['Liberation_Sans','Noto_Sans_CJK_KR',sans-serif]">
      <TitleBar />
      <main className="flex-1 min-h-0 mx-[3px] bg-[#e8e8e8] flex flex-col">
        <div className="h-[50px] bg-[#d0d0d0] pl-[3px] pt-[5px] shrink-0">
          <Toolbar />
          <QuoteBar />
        </div>

        <section className="flex-1 min-h-0 mx-[3px] mt-[1px] bg-white border border-[#909090] flex flex-col text-[11px] leading-[14px] text-[#404040]">
          {/* Price panel */}
          <div className="flex-1 min-h-0 flex">
            <div className="relative w-[42px] border-r border-[#808080] shrink-0">
              <div className="h-full flex flex-col justify-between pt-[38px] pb-10 pl-[1px]">
                {leftPrices.map((p) => (
                  <span key={p}>{p}</span>
                ))}
              </div>
              <button aria-label="표" className="absolute left-1 top-[19px] w-[15px] h-[14px] border border-black bg-[#e0e0e0]">
                <svg viewBox="0 0 13 12" fill="none" stroke="#707070">
                  <path d="M2.500 2.500h8v7h-8zM2.500 4.500h8M5.500 2.500v7M8.500 2.500v7" />
                </svg>
              </button>
              <div className="absolute left-0.5 top-[66.600%] w-9">
                <div className="bg-[#1560d0] text-white text-right leading-[13px]">7,400</div>
                <div className="text-[#1560d0] leading-[12px] pl-[2px]">1,28%</div>
              </div>
              <div className="absolute left-0.5 right-0.5 bottom-[7px]">
                <PriceTag value="03,174" />
              </div>
            </div>
            <div className="relative flex-1 bg-[#f8f8f8] overflow-hidden text-xs leading-[14px]">
              <PriceChart />
              <span className="absolute left-[3px] top-[5px] w-[6px] h-[6px] border border-[#606060] bg-[#c0c0c0]" />
              <span className="absolute left-[11px] top-[1px] border border-[#c0c0c0] bg-[#eeeeee] px-[5px] h-4 text-[#303030] whitespace-nowrap">
                대한조선 매물대 수(13)
              </span>
              <span className="absolute right-[416px] top-[41px] text-[#e00000] whitespace-nowrap">
                최고 116,300 (-7,65%, 13:48)
              </span>
              <span className="absolute left-[429px] bottom-[43px] text-[#0000e0] whitespace-nowrap">
                최저 103,500 (3,77%, 10:32)
              </span>
              <span className="absolute right-[2px] top-[22.400%] text-[#e800c8] whitespace-nowrap">
                피봇1차저항선 113,833 (5,69%)
              </span>
              <span className="absolute right-[2px] top-[62%] text-[#00e800] whitespace-nowrap">
                당일시가 108,300 (0,56%)
              </span>
              <span className="absolute right-[2px] top-[64.300%] text-[#993300] whitespace-nowrap">
                전일종가 107,900 (0,19%)
              </span>
            </div>
            <div className="relative w-[47px] border-l border-[#808080] shrink-0 overflow-hidden">
              <svg viewBox="0 0 8 817" preserveAspectRatio="none" className="absolute left-0 top-0 w-2 h-full">
                <Ticks values={rightMinor} />
                {[33, 128, 223, 318, 414, 509, 604, 699].map((v) => (
                  <path key={v} d={`M0 ${v}.500h6`} stroke="#808080" />
                ))}
              </svg>
              <div className="h-full flex flex-col justify-between pt-[25px] pb-[111px] pl-2 text-xs leading-[14px]">
                {['70,00', '65,00', '60,00', '55,00', '50,00', '45,00', '40,00', '35,00'].map((v) => (
                  <span key={v}>{v}</span>
                ))}
              </div>
              <div className="absolute left-[1px] top-[1px] text-[11px] leading-[12px] whitespace-nowrap">
                <div className="text-[#e8200c]">LC:3,77</div>
                <div className="text-[#1560d0]">HC:-7,65</div>
              </div>
              <div className="absolute left-1 top-[66.600%] w-10">
                <div className="bg-[#1560d0] text-white pl-1 leading-[13px]">107,40</div>
                <div className="text-[#1560d0] leading-[12px] pl-[2px]">-0,28%</div>
              </div>
              <div className="absolute left-[3px] right-[1px] bottom-[7px]">
                <PriceTag value="103,174" />
              </div>
            </div>
          </div>

          {/* OBV panel */}
          <div className="h-36 border-t border-[#808080] flex shrink-0">
            <div className="relative w-[42px] border-r border-[#808080] shrink-0 overflow-hidden">
              <svg viewBox="0 0 6 143" className="absolute right-0 top-0 w-[6px] h-full">
                <path d="M0 24.500h6M0 50.500h6M0 77.500h6M0 104.500h6M0 131.500h6" stroke="#808080" />
                <g transform="translate(3 0)">
                  <Ticks values={subMinor} />
                </g>
              </svg>
              <div className="h-full flex flex-col justify-between items-end pt-4 pb-[5px] pr-[6px]">
                {['00,000', '00,000', '00,000', '0,00', '00,000'].map((v, i) => (
                  <span key={i}>{v}</span>
                ))}
              </div>
            </div>
            <div className="relative flex-1 bg-[#f8f8f8] overflow-hidden">
              <ObvChart />
            </div>
            <div className="relative w-[47px] border-l border-[#808080] shrink-0 overflow-hidden">
              <svg viewBox="0 0 6 143" className="absolute left-0 top-0 w-[6px] h-full">
                <path d="M0 24.500h6M0 50.500h6M0 77.500h6M0 104.500h6M0 131.500h6" stroke="#808080" />
                <Ticks values={subMinor} />
              </svg>
              <div className="h-full flex flex-col justify-between pt-4 pb-[5px] pl-[6px]">
                {['300,000', '200,000', '100,000', '0,00', '-100,00'].map((v) => (
                  <span key={v}>{v}</span>
                ))}
              </div>
              <button aria-label="지표 닫기" className="absolute right-[3px] top-[3px] w-2 h-[7px] bg-[#404040] text-white">
                <X className="w-2 h-[7px]" strokeWidth={4} />
              </button>
            </div>
          </div>

          {/* Time axis */}
          <div className="h-[18px] border-t border-[#808080] flex shrink-0 text-xs leading-4">
            <div className="w-[42px] border-r border-[#808080] shrink-0" />
            <div className="relative flex-1 flex pl-[1px] pr-3">
              {times.map((t, i) => (
                <span key={i} className={`flex-1 basis-0 min-w-0 border-l border-[#808080] pl-[1px] ${i === 0 ? 'font-bold' : ''}`}>
                  {t}
                </span>
              ))}
              <span className="absolute left-[61.150%] top-0 w-[136px] h-[17px] border border-black bg-[#ffdc6e] text-center leading-[15px] whitespace-nowrap">
                2025/08/07(목) 12:50:45
              </span>
            </div>
            <div className="w-[47px] border-l border-[#808080] pl-1 shrink-0 overflow-hidden whitespace-nowrap">15:19:0</div>
          </div>
        </section>
        <ScrollBar />
        <div className="h-[2px] shrink-0" />
      </main>
    </div>
  );
}
